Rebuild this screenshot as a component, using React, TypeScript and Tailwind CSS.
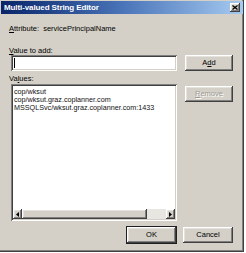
import React from "react";

const raised =
  "bg-[#d4d0c8] shadow-[inset_-1px_-1px_0_#404040,inset_1px_1px_0_#ffffff,inset_-2px_-2px_0_#808080,inset_2px_2px_0_#e4e2dc]";
const sunken =
  "bg-white shadow-[inset_1px_1px_0_#808080,inset_-1px_-1px_0_#ffffff,inset_2px_2px_0_#404040,inset_-2px_-2px_0_#d4d0c8]";

function Button({
  children,
  width,
  isDefault,
  disabled,
}: {
  children: React.ReactNode;
  width: string;
  isDefault?: boolean;
  disabled?: boolean;
}) {
  return (
    <div
      className={`${width} h-[16px] flex items-center justify-center ${raised} ${
        isDefault ? "outline outline-1 outline-[#202020]" : ""
      } ${disabled ? "text-[#a09c94] [text-shadow:1px_1px_0_#ffffff]" : "text-black"}`}
    >
      <span className="text-[7.5px] leading-none">{children}</span>
    </div>
  );
}

function ScrollArrow({ dir }: { dir: "left" | "right" }) {
  return (
    <div className={`w-[9px] h-[10px] flex items-center justify-center ${raised}`}>
      <svg width="3" height="5" viewBox="0 0 3 5">
        {dir === "left" ? <path d="M3 0 L0 2.5 L3 5 Z" fill="#000" /> : <path d="M0 0 L3 2.5 L0 5 Z" fill="#000" />}
      </svg>
    </div>
  );
}

export default function App() {
  const values = ["cop/wksut", "cop/wksut.graz.coplanner.com", "MSSQLSvc/wksut.graz.coplanner.com:1433"];
  return (
    <div className="w-[246px] h-[253px] bg-white" style={{ fontFamily: "'Liberation Sans', Arial, sans-serif" }}>
      <div className="w-[244px] h-[252px] bg-[#d4d0c8] flex flex-col shadow-[inset_-1px_-1px_0_#404040,inset_-2px_-2px_0_#808080]">
        {/* title bar */}
        <div className="h-[13px] mx-[1px] mt-[1px] bg-gradient-to-r from-[#0a246a] via-[#4a74b8] to-[#a6caf0] flex items-center justify-between px-[3px]">
          <span className="text-white font-bold text-[8px] leading-none tracking-[-0.1px]">Multi-valued String Editor</span>
          <div className={`w-[10px] h-[9px] flex items-center justify-center ${raised}`}>
            <svg width="6" height="5" viewBox="0 0 6 5">
              <path d="M0.5 0.5 L5.5 4.5 M5.5 0.5 L0.5 4.5" stroke="#000" strokeWidth="1.3" />
            </svg>
          </div>
        </div>

        <div className="flex flex-col pl-[9px] pr-[11px] text-black">
          <div className="mt-[10px] h-[9px] text-[7.5px] leading-[9px]">
            <span className="underline">A</span>ttribute:&nbsp; servicePrincipalName
          </div>

          <div className="mt-[13px] h-[9px] text-[7.5px] leading-[9px]">
            <span className="underline">V</span>alue to add:
          </div>

          <div className="flex items-start justify-between pl-[2px]">
            <div className={`w-[166px] h-[16px] ${sunken} flex items-center pl-[3px]`}>
              <div className="w-[1px] h-[10px] bg-black" />
            </div>
            <Button width="w-[48px]">
              A<span className="underline">d</span>d
            </Button>
          </div>

          <div className="mt-[3px] h-[9px] text-[7.5px] leading-[9px]">
            Va<span className="underline">l</span>ues:
          </div>

          <div className="mt-[1px] flex items-start justify-between pl-[2px]">
            <div className={`w-[166px] h-[137px] ${sunken} flex flex-col p-[2px]`}>
              <div className="flex-1 flex flex-col pl-[1px] pt-[2px] text-[7.2px] leading-[8px] text-[#111]">
                {values.map((v) => (
                  <div key={v} className="whitespace-nowrap">
                    {v}
                  </div>
                ))}
              </div>
              <div className="h-[10px] flex items-stretch bg-[#e8e6e1]">
                <ScrollArrow dir="left" />
                <div className={`w-[125px] h-[10px] ${raised}`} />
                <div className="flex-1" />
                <ScrollArrow dir="right" />
              </div>
            </div>
            <div className="mt-[2px]">
              <Button width="w-[48px]" disabled>
                <span className="underline">R</span>emove
              </Button>
            </div>
          </div>

          <div className="mt-[6px] flex justify-end gap-[7px]">
            <Button width="w-[49px]" isDefault>
              OK
            </Button>
            <Button width="w-[50px]">Cancel</Button>
          </div>
        </div>
      </div>
    </div>
  );
}
